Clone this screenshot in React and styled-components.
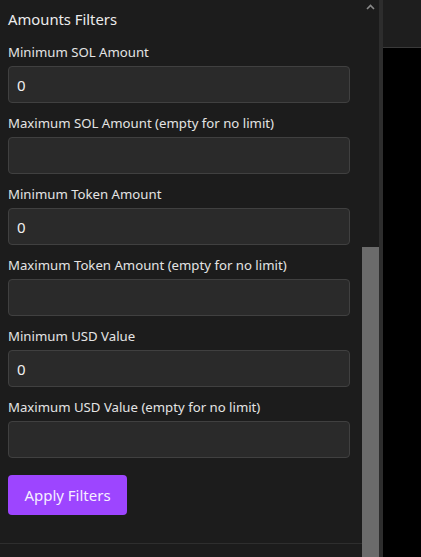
import React from "react";
import styled, { createGlobalStyle } from "styled-components";

const Global = createGlobalStyle`
  html, body {
    margin: 0;
    padding: 0;
    background: #000;
  }
  * { box-sizing: border-box; }
`;

const Page = styled.div`
  display: flex;
  height: 557px;
  overflow: hidden;
  font-family: "Noto Sans", "Open Sans", sans-serif;
`;

const Sidebar = styled.div`
  display: flex;
  width: 379px;
  background: #1c1c1c;
`;

const Content = styled.div`
  flex: 1;
  display: flex;
  flex-direction: column;
  padding: 8px 12px 0 8px;
`;

const Heading = styled.h3`
  margin: 0 0 13px;
  font-size: 14.8px;
  line-height: 22px;
  font-weight: 400;
  color: #ececec;
`;

const Fields = styled.div`
  display: flex;
  flex-direction: column;
  gap: 11px;
`;

const Field = styled.label`
  display: flex;
  flex-direction: column;
  gap: 5px;
`;

const Label = styled.span`
  font-size: 13.2px;
  line-height: 18px;
  color: #e4e4e4;
`;

const Input = styled.input`
  height: 37px;
  width: 100%;
  padding: 0 8px;
  background: #2a2a2a;
  border: 1px solid #404040;
  border-radius: 4px;
  color: #f0f0f0;
  font-family: inherit;
  font-size: 15px;
  outline: none;
`;

const Button = styled.button`
  align-self: flex-start;
  margin-top: 17px;
  height: 40px;
  width: 119px;
  border: none;
  border-radius: 4px;
  background: #9d45ff;
  color: #f6eeff;
  font-family: inherit;
  font-size: 15px;
`;

const Footer = styled.div`
  margin: 28px -12px 0 -8px;
  border-top: 1px solid #2e2e2e;
  flex: 1;
`;

const Scrollbar = styled.div`
  width: 17px;
  display: flex;
  flex-direction: column;
  align-items: center;
`;

const Arrow = styled.div`
  height: 14px;
  display: flex;
  align-items: center;
  justify-content: center;
`;

const Thumb = styled.div`
  margin-top: ${(p) => p.$offset}px;
  flex: 1;
  width: 100%;
  background: #6b6b6b;
`;

const Divider = styled.div`
  width: 4px;
  background: #2d2d2d;
`;

const Main = styled.div`
  flex: 1;
  display: flex;
  flex-direction: column;
  background: #000;
`;

const TopBar = styled.div`
  height: 48px;
  background: #1e1e1e;
  border-bottom: 1px solid #3a3a3a;
`;

const fields = [
  { label: "Minimum SOL Amount", value: "0" },
  { label: "Maximum SOL Amount (empty for no limit)", value: "" },
  { label: "Minimum Token Amount", value: "0" },
  { label: "Maximum Token Amount (empty for no limit)", value: "" },
  { label: "Minimum USD Value", value: "0" },
  { label: "Maximum USD Value (empty for no limit)", value: "" },
];

export default function App() {
  return (
    <Page>
      <Global />
      <Sidebar>
        <Content>
          <Heading>Amounts Filters</Heading>
          <Fields>
            {fields.map((f) => (
              <Field key={f.label}>
                <Label>{f.label}</Label>
                <Input defaultValue={f.value} />
              </Field>
            ))}
          </Fields>
          <Button>Apply Filters</Button>
          <Footer />
        </Content>
        <Scrollbar>
          <Arrow>
            <svg width="9" height="6" viewBox="0 0 9 6">
              <path d="M1 5 L4.5 1.5 L8 5" stroke="#8a8a8a" strokeWidth="1.6" fill="none" />
            </svg>
          </Arrow>
          <Thumb $offset={233} />
        </Scrollbar>
      </Sidebar>
      <Divider />
      <Main>
        <TopBar />
      </Main>
    </Page>
  );
}
